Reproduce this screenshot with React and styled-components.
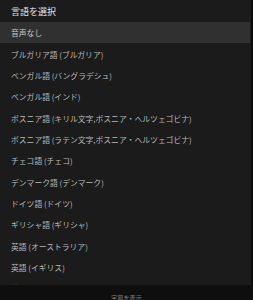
import React from "react";
import styled, { createGlobalStyle } from "styled-components";

const Global = createGlobalStyle`
  html, body { margin: 0; padding: 0; background: #0b0b0b; }
  body { font-family: "Noto Sans CJK JP", "Noto Sans", sans-serif; overflow: hidden; }
`;

const Screen = styled.div`
  width: 253px;
  height: 300px;
  display: flex;
  flex-direction: column;
  overflow: hidden;
  background: #0b0b0b;
`;

const Panel = styled.div`
  width: 251px;
  height: 285px;
  flex: none;
  background: #1b1b1b;
  display: flex;
  flex-direction: column;
  overflow: hidden;
`;

const Title = styled.div`
  height: 22px;
  flex: none;
  display: flex;
  align-items: center;
  padding-left: 11px;
  font-size: 9px;
  color: #e2e2e2;
`;

const List = styled.div`
  display: flex;
  flex-direction: column;
  padding-right: 1px;
`;

const Item = styled.div`
  height: 21.36px;
  flex: none;
  display: flex;
  align-items: center;
  padding-left: 11px;
  font-size: 7.8px;
  white-space: nowrap;
  color: ${(p) => (p.$active ? "#c8c8c8" : "#b9b9b9")};
  background: ${(p) => (p.$active ? "#303030" : "transparent")};
`;

const Bottom = styled.div`
  height: 24px;
  flex: none;
  display: flex;
  align-items: center;
  justify-content: center;
  background: #0e0e0e;
  font-size: 6.2px;
  color: #7c7c7c;
`;

const items = [
  "音声なし",
  "ブルガリア語 (ブルガリア)",
  "ベンガル語 (バングラデシュ)",
  "ベンガル語 (インド)",
  "ボスニア語 (キリル文字,ボスニア・ヘルツェゴビナ)",
  "ボスニア語 (ラテン文字,ボスニア・ヘルツェゴビナ)",
  "チェコ語 (チェコ)",
  "デンマーク語 (デンマーク)",
  "ドイツ語 (ドイツ)",
  "ギリシャ語 (ギリシャ)",
  "英語 (オーストラリア)",
  "英語 (イギリス)",
  "英語 (アメリカ)",
];

export default function App() {
  return (
    <>
      <Global />
      <Screen>
        <Panel>
          <Title>言語を選択</Title>
          <List>
            {items.map((t, i) => (
              <Item key={t} $active={i === 0}>
                {t}
              </Item>
            ))}
          </List>
        </Panel>
        <Bottom>字幕を表示</Bottom>
      </Screen>
    </>
  );
}
